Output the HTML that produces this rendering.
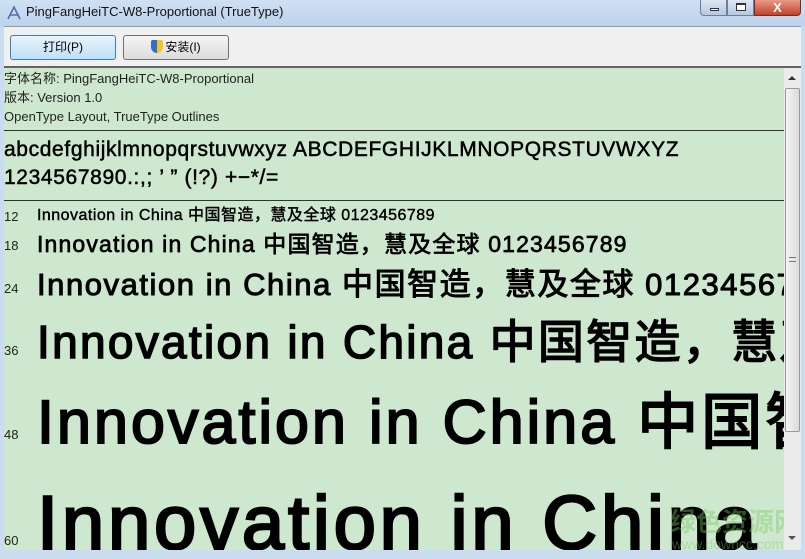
<!DOCTYPE html>
<html><head><meta charset="utf-8"><style>
*{margin:0;padding:0;box-sizing:border-box}
body{width:805px;height:559px;overflow:hidden;background:#c9dcf0;position:relative;font-family:"Liberation Sans","Noto Sans CJK SC",sans-serif}
.a{position:absolute;white-space:nowrap;line-height:1}
#title{position:absolute;left:0;top:0;width:805px;height:26px;background:linear-gradient(#cfe0f3,#bcd3ec)}
#tool{position:absolute;left:4px;top:26px;width:797px;height:42px;background:#f0f0f0;border-top:1px solid #8a9bb0;border-bottom:2px solid #646464}
#content{position:absolute;left:4px;top:68px;width:780px;height:482px;background:#cee8cf;overflow:hidden}
#sb{position:absolute;left:784px;top:68px;width:17px;height:482px;background:#ebebeb}
.btn{position:absolute;top:35px;height:25px;border:1px solid #707070;border-radius:3px;font-size:12px;text-align:center;line-height:23px}
.hr{position:absolute;left:0;width:780px;height:1px;background:#333}
.n{font-size:13px;color:#222;left:0}
.t{left:33px;color:#000;letter-spacing:0.05em}
</style></head><body>
<div id="title">
 <svg class="a" style="left:6px;top:5px" width="16" height="16" viewBox="0 0 16 16"><path d="M2 14 L8 2 L14 14 M4.5 10 H11.5" stroke="#5a6aa8" stroke-width="1.6" fill="none"/></svg>
 <div class="a" style="left:26px;top:5px;font-size:13px;color:#111">PingFangHeiTC-W8-Proportional (TrueType)</div>
 <div class="a" style="left:700px;top:0;width:27px;height:16px;background:linear-gradient(#dce7f4,#b7c8de);border:1px solid #6d7f99;border-top:none;border-radius:0 0 0 4px"><div style="position:absolute;left:9px;top:8px;width:9px;height:3px;background:#fff;border:1px solid #333"></div></div>
 <div class="a" style="left:727px;top:0;width:27px;height:16px;background:linear-gradient(#dce7f4,#b7c8de);border:1px solid #6d7f99;border-top:none"><div style="position:absolute;left:8px;top:3px;width:10px;height:8px;border:1px solid #333;border-top-width:2px;background:#fff"></div></div>
 <div class="a" style="left:754px;top:0;width:47px;height:16px;background:linear-gradient(#e89a8a,#c2412c);border:1px solid #7a2a20;border-top:none;border-radius:0 0 4px 0;color:#fff;font-size:13px;font-weight:bold;text-align:center;line-height:15px">X</div>
</div>
<div id="tool">
 <div class="btn" style="left:6px;top:8px;width:106px;background:linear-gradient(#e8f4fc,#bfe0f6);border-color:#3c7fb1">打印(P)</div>
 <div class="btn" style="left:119px;top:8px;width:106px;background:linear-gradient(#f4f4f4,#dcdcdc)"><span style="display:inline-block;width:12px;height:13px;background:linear-gradient(90deg,#2e6fd0 50%,#f2c530 50%);border-radius:2px 2px 6px 6px;vertical-align:-2px;margin-right:2px"></span>安装(I)</div>
</div>
<div id="content">
 <div class="a" style="left:0;top:4px;font-size:13px;color:#222">字体名称: PingFangHeiTC-W8-Proportional</div>
 <div class="a" style="left:0;top:23px;font-size:13px;color:#222">版本: Version 1.0</div>
 <div class="a" style="left:0;top:42px;font-size:13px;color:#222">OpenType Layout, TrueType Outlines</div>
 <div class="hr" style="top:62px"></div>
 <div class="a" style="left:0;top:71px;font-size:21px;color:#000;letter-spacing:0.03em;-webkit-text-stroke:0.5px #000">abcdefghijklmnopqrstuvwxyz ABCDEFGHIJKLMNOPQRSTUVWXYZ</div>
 <div class="a" style="left:0;top:99px;font-size:21px;color:#000;letter-spacing:0.03em;-webkit-text-stroke:0.5px #000">1234567890.:,; ’ ” (!?) +−*/=</div>
 <div class="hr" style="top:132px"></div>
 <div class="a n" style="top:142px">12</div><div class="a t" style="top:140px;font-size:16px;letter-spacing:0.03em;-webkit-text-stroke:0.4px #000">Innovation in China 中国智造，慧及全球 0123456789</div>
 <div class="a n" style="top:171px">18</div><div class="a t" style="top:165px;font-size:23px;-webkit-text-stroke:0.7px #000">Innovation in China 中国智造，慧及全球 0123456789</div>
 <div class="a n" style="top:214px">24</div><div class="a t" style="top:201px;font-size:31px;-webkit-text-stroke:1px #000">Innovation in China 中国智造，慧及全球 0123456789</div>
 <div class="a n" style="top:276px">36</div><div class="a t" style="top:251px;font-size:46px;-webkit-text-stroke:1.5px #000">Innovation in China 中国智造，慧及全球</div>
 <div class="a n" style="top:360px">48</div><div class="a t" style="top:324px;font-size:61px;-webkit-text-stroke:2px #000">Innovation in China 中国智造</div>
 <div class="a n" style="top:466px">60</div><div class="a t" style="top:418px;font-size:76px;-webkit-text-stroke:2.5px #000">Innovation in China</div>
 <div class="a" style="left:666px;top:441px;font-size:26px;color:rgba(120,200,90,.4);font-weight:bold">绿色资源网</div>
 <div class="a" style="left:668px;top:469px;font-size:14px;color:rgba(120,200,90,.4)">www.downcc.com</div>
</div>
<div id="sb">
 <div class="a" style="left:4px;top:8px;width:0;height:0;border-left:4px solid transparent;border-right:4px solid transparent;border-bottom:4px solid #333"></div>
 <div class="a" style="left:1px;top:20px;width:15px;height:344px;background:linear-gradient(90deg,#f4f4f4,#dcdcdc);border:1px solid #999;border-radius:2px"></div>
 <div class="a" style="left:5px;top:189px;width:7px;height:5px;border-top:1px solid #777;border-bottom:1px solid #777"></div>
 <div class="a" style="left:4px;top:468px;width:0;height:0;border-left:4px solid transparent;border-right:4px solid transparent;border-top:4px solid #555"></div>
</div>
</body></html>
